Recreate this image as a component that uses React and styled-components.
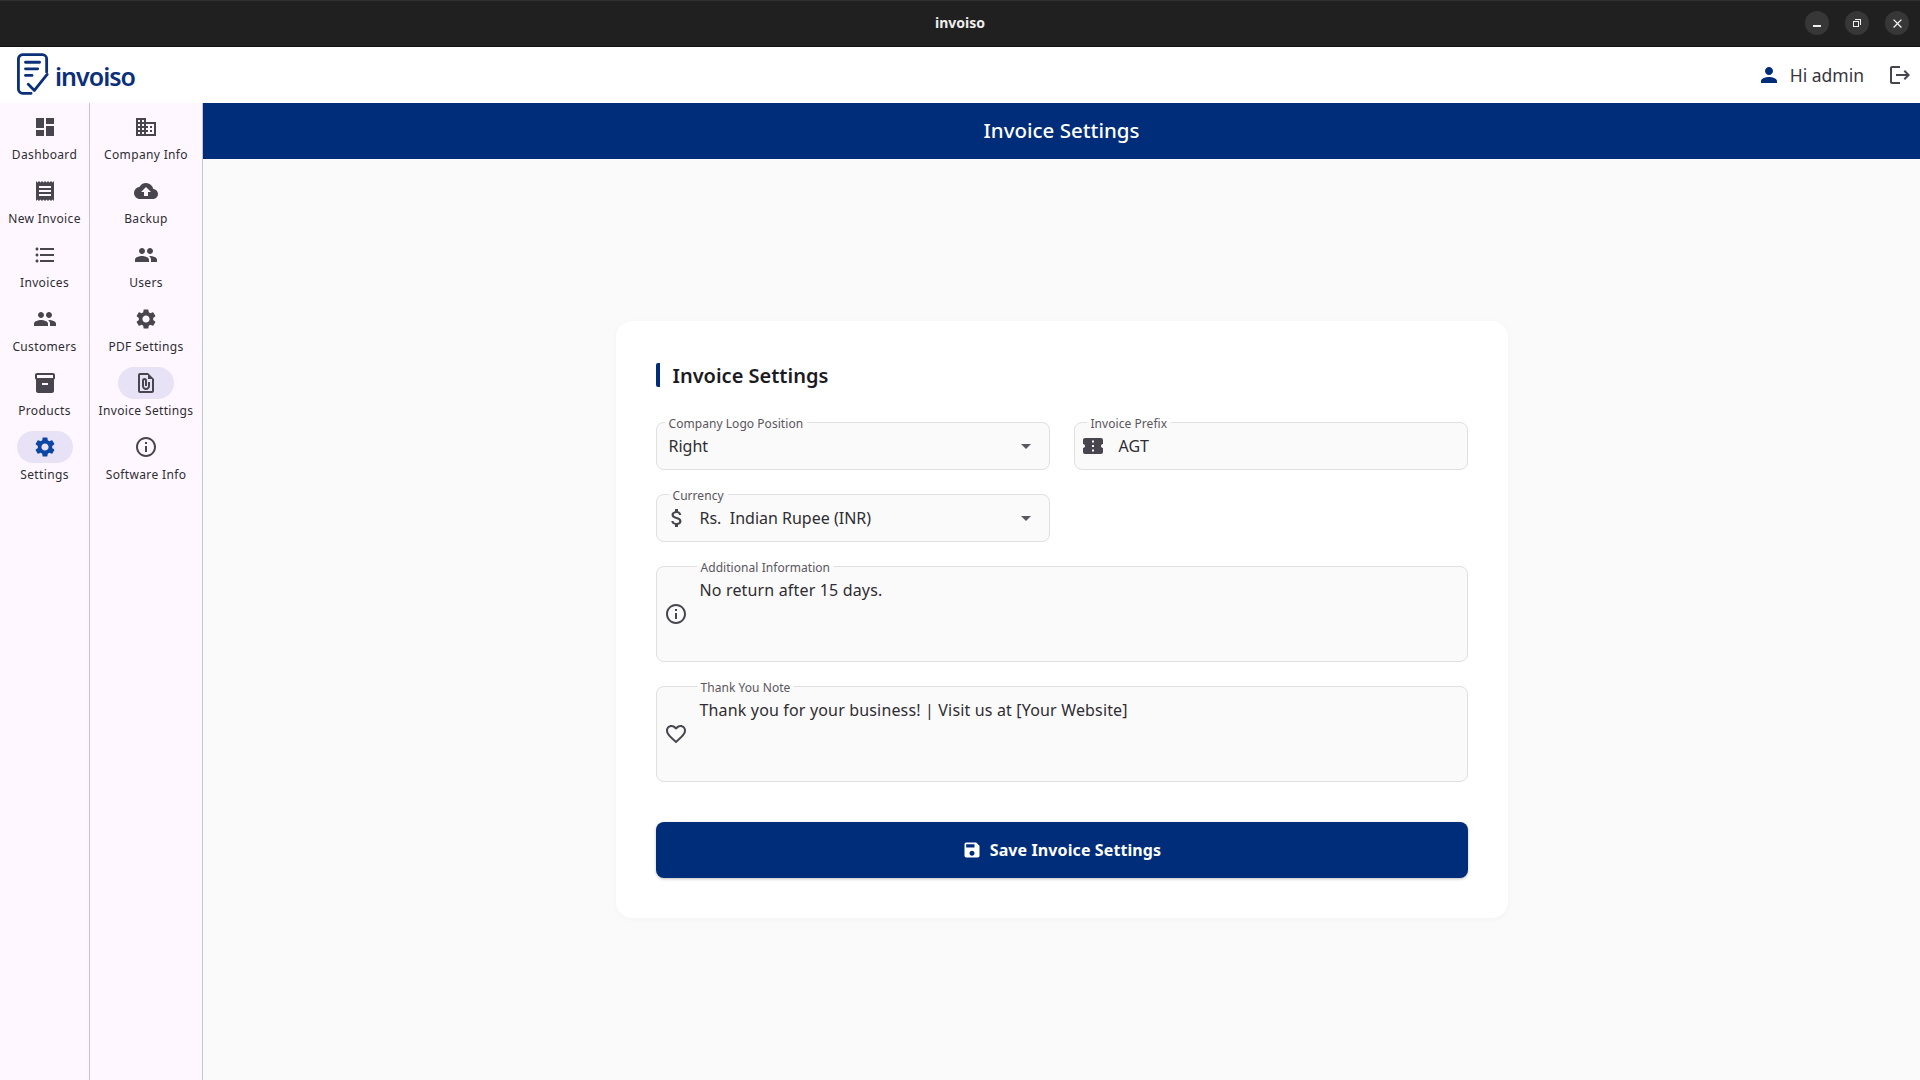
import React from 'react'
import styled, { createGlobalStyle } from 'styled-components'
import {
  MdDashboard, MdReceipt, MdFormatListBulleted, MdPeople, MdInventory2, MdSettings,
  MdDomain, MdCloudUpload, MdOutlineFilePresent, MdInfoOutline, MdPerson, MdLogout,
  MdArrowDropDown, MdAttachMoney, MdConfirmationNumber, MdFavoriteBorder, MdSave, MdClose,
} from 'react-icons/md'

const GlobalStyle = createGlobalStyle`
  html, body { margin: 0; padding: 0; }
  body { font-family: "Noto Sans", "Open Sans", sans-serif; background: #fafafa; }
  * { box-sizing: border-box; }
`

const mainNav = [
  { label: 'Dashboard', icon: MdDashboard },
  { label: 'New Invoice', icon: MdReceipt },
  { label: 'Invoices', icon: MdFormatListBulleted },
  { label: 'Customers', icon: MdPeople },
  { label: 'Products', icon: MdInventory2 },
  { label: 'Settings', icon: MdSettings, active: true, blue: true },
]

const settingsNav = [
  { label: 'Company Info', icon: MdDomain },
  { label: 'Backup', icon: MdCloudUpload },
  { label: 'Users', icon: MdPeople },
  { label: 'PDF Settings', icon: MdSettings },
  { label: 'Invoice Settings', icon: MdOutlineFilePresent, active: true },
  { label: 'Software Info', icon: MdInfoOutline },
]

const Logo = () => (
  <LogoMark viewBox="0 0 34 44" fill="none" stroke="#0b3079" strokeWidth="3" strokeLinecap="round" strokeLinejoin="round">
    <path d="M15 42.5H6a4.5 4.5 0 0 1-4.5-4.5V6A4.5 4.5 0 0 1 6 1.5h21A4.5 4.5 0 0 1 31.5 6v14" />
    <path d="M9 9.5h15M9 16.5h13M9 23.5h7" />
    <path d="M12 33l6.5 6.5L32 22.5" />
  </LogoMark>
)

const NavColumn = ({ items, width }) => (
  <Rail $width={width}>
    {items.map((item) => (
      <RailItem key={item.label}>
        <IconPill $active={item.active} $blue={item.blue}>
          <item.icon size={24} />
        </IconPill>
        <RailLabel>{item.label}</RailLabel>
      </RailItem>
    ))}
  </Rail>
)

const App = () => (
  <Page>
    <GlobalStyle />
    <TitleBar>
      <WindowTitle>invoiso</WindowTitle>
      <WindowButtons>
        <WindowButton><MinimizeGlyph /></WindowButton>
        <WindowButton><RestoreGlyph /></WindowButton>
        <WindowButton><MdClose size={15} /></WindowButton>
      </WindowButtons>
    </TitleBar>
    <Header>
      <Brand>
        <Logo />
        <BrandName>invoiso</BrandName>
      </Brand>
      <UserArea>
        <MdPerson size={24} color="#002d79" />
        <UserName>Hi admin</UserName>
        <LogoutButton><MdLogout size={24} /></LogoutButton>
      </UserArea>
    </Header>
    <Body>
      <NavColumn items={mainNav} width={90} />
      <NavColumn items={settingsNav} width={113} />
      <Main>
        <Banner>Invoice Settings</Banner>
        <Content>
          <Card>
            <CardTitle>Invoice Settings</CardTitle>
            <FormGrid>
              <Field>
                <FieldLabel $inset={8}>Company Logo Position</FieldLabel>
                <FieldRow>
                  <FieldValue>Right</FieldValue>
                  <Caret><MdArrowDropDown size={24} /></Caret>
                </FieldRow>
              </Field>
              <Field>
                <FieldLabel $inset={12}>Invoice Prefix</FieldLabel>
                <FieldRow>
                  <FieldIcon $left={-2} $right={3}><MdConfirmationNumber size={24} /></FieldIcon>
                  <FieldValue>AGT</FieldValue>
                </FieldRow>
              </Field>
              <Field>
                <FieldLabel $inset={12}>Currency</FieldLabel>
                <FieldRow>
                  <FieldIcon><MdAttachMoney size={24} /></FieldIcon>
                  <FieldValue>Rs.&nbsp; Indian Rupee (INR)</FieldValue>
                  <Caret><MdArrowDropDown size={24} /></Caret>
                </FieldRow>
              </Field>
              <Spacer />
              <WideField>
                <FieldLabel $inset={40}>Additional Information</FieldLabel>
                <AreaRow>
                  <AreaIcon><MdInfoOutline size={24} /></AreaIcon>
                  <AreaText>No return after 15 days.</AreaText>
                </AreaRow>
              </WideField>
              <WideField>
                <FieldLabel $inset={40}>Thank You Note</FieldLabel>
                <AreaRow>
                  <AreaIcon><MdFavoriteBorder size={24} /></AreaIcon>
                  <AreaText>Thank you for your business! | Visit us at [Your Website]</AreaText>
                </AreaRow>
              </WideField>
            </FormGrid>
            <SaveButton>
              <MdSave size={20} />
              Save Invoice Settings
            </SaveButton>
          </Card>
        </Content>
      </Main>
    </Body>
  </Page>
)

const Page = styled.div`
  display: flex;
  flex-direction: column;
  width: 1920px;
  height: 1080px;
  overflow: hidden;
`

const TitleBar = styled.div`
  position: relative;
  display: flex;
  align-items: center;
  justify-content: center;
  height: 47px;
  flex-shrink: 0;
  background: #202020;
  border-top: 1px solid #303030;
  border-bottom: 1px solid #111;
`

const WindowTitle = styled.div`
  margin-bottom: 3px;
  color: #ededed;
  font-size: 14px;
  font-weight: 700;
`

const WindowButtons = styled.div`
  position: absolute;
  right: 11px;
  top: 10px;
  display: flex;
  gap: 16px;
`

const WindowButton = styled.div`
  display: flex;
  align-items: center;
  justify-content: center;
  width: 24px;
  height: 24px;
  border-radius: 50%;
  background: #373737;
  color: #f0f0f0;
`

const MinimizeGlyph = styled.span`
  width: 8px;
  height: 1.5px;
  margin-top: 6px;
  background: #f0f0f0;
`

const RestoreGlyph = styled.span`
  position: relative;
  width: 6px;
  height: 6px;
  margin: 2px 2px 0 0;
  border: 1px solid #f0f0f0;

  &::after {
    content: '';
    position: absolute;
    top: -3px;
    right: -3px;
    width: 5px;
    height: 5px;
    border-top: 1px solid #f0f0f0;
    border-right: 1px solid #f0f0f0;
  }
`

const Header = styled.header`
  display: flex;
  align-items: center;
  justify-content: space-between;
  height: 56px;
  flex-shrink: 0;
  padding: 0 8px 0 17px;
  background: #fff;
`

const Brand = styled.div`
  display: flex;
  align-items: center;
  gap: 6px;
`

const LogoMark = styled.svg`
  width: 32px;
  height: 42px;
  margin-bottom: 2px;
`

const BrandName = styled.div`
  margin-top: 1px;
  color: #0b3079;
  font-size: 25px;
  font-weight: 600;
  letter-spacing: -1px;
`

const UserArea = styled.div`
  display: flex;
  align-items: center;
  color: #49454f;
`

const UserName = styled.span`
  margin-left: 9px;
  color: #38353d;
  font-size: 17.5px;
`

const LogoutButton = styled.span`
  display: flex;
  margin-left: 24px;
`

const Body = styled.div`
  display: flex;
  flex: 1;
  min-height: 0;
`

const Rail = styled.nav`
  display: flex;
  flex-direction: column;
  flex-shrink: 0;
  width: ${({ $width }) => $width}px;
  padding-top: 8px;
  background: #fef7ff;
  border-right: 1px solid #cac4d0;
`

const RailItem = styled.div`
  display: flex;
  flex-direction: column;
  align-items: center;
  height: 64px;
`

const IconPill = styled.div`
  display: flex;
  align-items: center;
  justify-content: center;
  width: 56px;
  height: 32px;
  border-radius: 16px;
  background: ${({ $active }) => ($active ? '#e8e2f6' : 'transparent')};
  color: ${({ $blue }) => ($blue ? '#0b46a5' : '#49454f')};
`

const RailLabel = styled.div`
  margin-top: 2px;
  color: #2f2d33;
  font-size: 12px;
  line-height: 20px;
  letter-spacing: 0.35px;
  white-space: nowrap;
`

const Main = styled.main`
  display: flex;
  flex: 1;
  flex-direction: column;
  min-width: 0;
`

const Banner = styled.div`
  display: flex;
  align-items: center;
  justify-content: center;
  height: 56px;
  flex-shrink: 0;
  padding-bottom: 2px;
  background: #002d79;
  color: #fff;
  font-size: 20.5px;
  font-weight: 500;
`

const Content = styled.div`
  display: flex;
  justify-content: center;
  flex: 1;
  padding-top: 162px;
  background: #fafafa;
`

const Card = styled.section`
  display: flex;
  flex-direction: column;
  width: 892px;
  height: 597px;
  padding: 42px 40px 40px;
  border-radius: 16px;
  background: #fff;
  box-shadow: 0 1px 6px rgba(0, 0, 0, 0.03);
`

const CardTitle = styled.h2`
  height: 24px;
  margin: 0 0 25px;
  padding-left: 13px;
  border-left: 4px solid #002d79;
  border-radius: 2px;
  color: #1c1b1f;
  font-size: 20px;
  font-weight: 600;
  line-height: 26px;
`

const FormGrid = styled.div`
  display: grid;
  grid-template-columns: 394px 394px;
  column-gap: 24px;
  row-gap: 14px;
`

const Field = styled.fieldset`
  min-width: 0;
  height: 58px;
  margin: 0;
  padding: 0 11px 0 12px;
  border: 1px solid #e0e0e0;
  border-radius: 8px;
  background: #fafafa;
`

const WideField = styled(Field)`
  grid-column: 1 / -1;
  height: 106px;
`

const Spacer = styled.div``

const FieldLabel = styled.legend`
  margin-left: ${({ $inset }) => $inset - 12}px;
  padding: 4px 4px 0;
  color: #5a5760;
  font-size: 12px;
  line-height: 16px;
  letter-spacing: 0.05px;
`

const FieldRow = styled.div`
  display: flex;
  align-items: center;
  height: 28px;
`

const AreaRow = styled.div`
  display: flex;
  height: 76px;
  align-items: center;
`

const FieldIcon = styled.span`
  display: flex;
  flex-shrink: 0;
  width: 31px;
  margin-left: ${({ $left }) => $left || 0}px;
  margin-right: ${({ $right }) => $right || 0}px;
  color: #49454f;
  svg { margin-left: -4px; }
`

const AreaIcon = styled(FieldIcon)`
  svg { margin-left: -5px; }
`

const FieldValue = styled.div`
  flex: 1;
  color: #2f2d33;
  font-size: 16px;
  white-space: nowrap;
`

const AreaText = styled(FieldValue)`
  align-self: flex-start;
  margin-top: 2px;
  line-height: 24px;
  letter-spacing: 0.16px;
`

const Caret = styled.span`
  display: flex;
  color: #5a5760;
`

const SaveButton = styled.button`
  display: flex;
  align-items: center;
  justify-content: center;
  gap: 8px;
  width: 812px;
  height: 56px;
  margin-top: 40px;
  border: 0;
  border-radius: 8px;
  background: #002d79;
  box-shadow: 0 1px 3px rgba(0, 0, 0, 0.25);
  color: #fff;
  font-family: inherit;
  font-size: 16px;
  font-weight: 700;
  letter-spacing: 0.1px;
`

export default App
